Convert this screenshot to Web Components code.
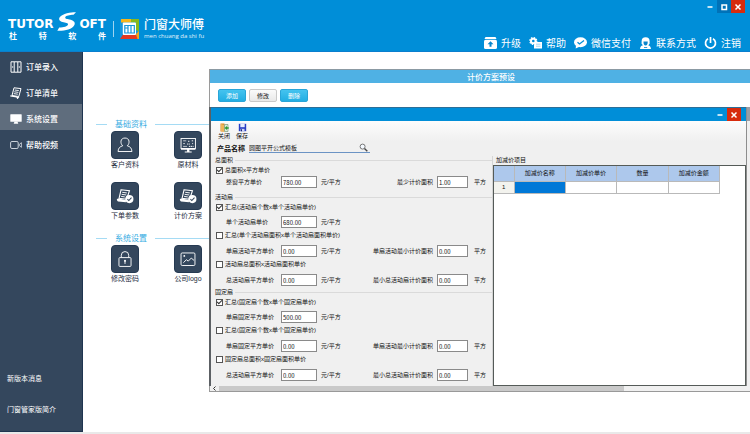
<!DOCTYPE html>
<html lang="zh-CN">
<head>
<meta charset="utf-8">
<title>门窗大师傅</title>
<style>
  html, body { margin: 0; }
  body {
    min-height: 100vh; display: flex; flex-direction: column; background: #fff;
    font-family: "Liberation Sans", "Noto Sans CJK SC", sans-serif; font-size: 6px; color: #111;
    --blue: #008ed8; --navy: #34475d;
  }
  main { flex: 1; display: flex; }
</style>
</head>
<body>
<app-header></app-header>
<main>
  <side-nav></side-nav>
  <tile-menu></tile-menu>
  <plan-dialog></plan-dialog>
</main>
<status-strip></status-strip>

<script>
const define = (name, html) => {
  const t = document.createElement('template');
  t.innerHTML = '<style>*,:host{box-sizing:border-box}button{font:inherit;color:inherit;border:0;background:none;padding:0;margin:0}a{color:inherit;text-decoration:none}svg{display:block}</style>' + html;
  customElements.define(name, class extends HTMLElement {
    constructor() {
      super();
      this.attachShadow({ mode: 'open' }).append(t.content.cloneNode(true));
    }
  });
};

const ICONS = {
  upgrade: '<svg viewBox="0 0 13 12"><path d="M1.5 0h10l1 2H.5z" fill="#fff"/><rect y="2.8" width="13" height="9.2" rx="1.6" fill="#fff"/><path d="M6.500 4.300l3 3H7.500v2.400h-2V7.300h-2z" fill="#0a86cc"/></svg>',
  help: '<svg viewBox="0 0 13 12"><circle cx="4.300" cy="4" r="2.300" fill="none" stroke="#fff" stroke-width="2"/><circle cx="4.300" cy="4" r="3.500" fill="none" stroke="#fff" stroke-width="1.200" stroke-dasharray="1.400 1.350"/><path d="M6 5h7v6.500H5V8z" fill="#fff"/><path d="M7 7.200h4.500M7 9.200h4.500" stroke="#7cc3ea" stroke-width=".7"/></svg>',
  chat: '<svg viewBox="0 0 13 12"><ellipse cx="6.500" cy="5.200" rx="6.500" ry="5" fill="#fff"/><path d="M2 8l-.3 3.600L6 9.500z" fill="#fff"/><path d="M3.500 5.200l2 1.700 4.500-3.300" fill="none" stroke="#008ed8" stroke-width="1.300"/></svg>',
  contact: '<svg viewBox="0 0 13 12"><path d="M2.600 4.500a4 4.200 0 0 1 8 0v2L9 9H4.200L2.600 6.500z" fill="#fff"/><path d="M1 12c.2-2.400 1.300-3.400 3.500-3.700h4c2.200.3 3.300 1.300 3.500 3.700z" fill="#fff"/><path d="M4.500 4.600h4.200c.2 3-.8 3.800-2.100 3.800S4.300 7.600 4.500 4.600z" fill="#0a86cc"/><path d="M5 10.500h3.200" stroke="#0a86cc" stroke-width=".8"/></svg>',
  power: '<svg viewBox="0 0 13 12"><path d="M4 1.700a5 5 0 1 0 5 0" fill="none" stroke="#fff" stroke-width="1.700"/><path d="M6.500 0v6" stroke="#fff" stroke-width="1.700"/></svg>',
  door: '<svg viewBox="0 0 12 12"><path d="M1 .8h10v10.400H1zM4.200 1v10M7.800 1v10" fill="none" stroke="#fff"/><path d="M2.700 5v2M9.300 5v2" stroke="#fff" stroke-width=".7"/></svg>',
  list: '<svg viewBox="0 0 12 12"><path d="M4 .8l7 .8-2.200 7.900-6.800-1z" fill="none" stroke="#fff"/><path d="M4.800 3l4 .6M4.300 4.800l4 .6M3.800 6.600l4 .6" stroke="#fff" stroke-width=".9"/><path d="M.3 8.800l6.400 1 .8 1.500 1.400-1.700" fill="none" stroke="#fff" stroke-width="1.200"/></svg>',
  monitor: '<svg viewBox="0 0 12 12"><rect x=".3" y="1.300" width="11.400" height="7.400" rx=".5" fill="#fff"/><path d="M4.500 8.500h3l.8 2.200H3.700z" fill="#fff"/></svg>',
  camera: '<svg viewBox="0 0 12 12"><rect x=".6" y="2.500" width="7.600" height="7" rx="1.300" fill="none" stroke="#dce3ea" stroke-width=".9"/><path d="M9.300 5.400l2.100-1.700v4.600L9.300 6.600z" fill="none" stroke="#dce3ea" stroke-width=".8"/></svg>',
  user: '<svg viewBox="0 0 28 28"><path d="M11.600 14.800C9.800 13.400 9.500 11.500 9.700 9.800 10 7.700 11.600 6.500 14 6.500s4 1.200 4.300 3.300c.2 1.700-.1 3.600-1.900 5 3 .9 4.800 2.300 5.100 6.200H6.500c.3-3.900 2.100-5.300 5.100-6.200z" fill="none" stroke="#fff" stroke-width="1"/></svg>',
  material: '<svg viewBox="0 0 28 28"><rect x="6.500" y="7" width="15.500" height="10.800" fill="none" stroke="#fff"/><path d="M9 9.500h3M14 10h2M18 9.500h2M9 12.500h2M13 13h3M18.500 12.500h1M9 15.500h4M15 15.500h5" stroke="#fff" stroke-dasharray="1.500 .6"/><path d="M6.500 17.500H22v1.700H6.500zM13 19h2.500v2H18v1h-7.500v-1H13z" fill="#fff"/></svg>',
  doc: '<svg viewBox="0 0 28 28"><path d="M9.800 7.200l9 1-3 9.300-8.200-1z" fill="none" stroke="#fff" stroke-width="1.200"/><path d="M11 10l5 .7M10.400 12.200l5 .7M9.800 14.400l4 .6" stroke="#fff"/><path d="M5.300 17.300l1.700-.5 8 1.500v2.500l-8.500-.9c-.9-.2-1.400-1.500-1.200-2.600z" fill="#fff"/><circle cx="18.700" cy="17.300" r="4.400" fill="#fff"/><path d="M16.600 17.300l1.500 1.600 2.900-3.200" fill="none" stroke="#34475d" stroke-width="1.100"/></svg>',
  lock: '<svg viewBox="0 0 28 28"><rect x="7.500" y="12.500" width="13" height="9.500" rx="1" fill="none" stroke="#fff"/><path d="M10 12.300V10a4 4 0 0 1 8 0v2.300" fill="none" stroke="#fff"/><circle cx="14" cy="16" r="1.100" fill="#fff"/><path d="M14 16v3.300" stroke="#fff"/></svg>',
  image: '<svg viewBox="0 0 28 28"><rect x="6.500" y="7.500" width="15" height="13.500" rx="1.200" fill="none" stroke="#fff"/><circle cx="10" cy="10.700" r="1" fill="#fff"/><path d="M9 18l3.300-3.200 2 1.500 3.200-3.300 3 2.500" fill="none" stroke="#fff"/></svg>'
};

/* ---------- small parts ---------- */
customElements.define('app-icon', class extends HTMLElement {
  constructor() {
    super();
    this.attachShadow({ mode: 'open' }).innerHTML =
      '<style>:host{display:block;flex:none}svg{display:block;width:100%;height:100%}</style>' + (ICONS[this.getAttribute('name')] || '');
  }
});

define('status-strip', '<style>:host{display:block;height:2px;background:#e9e9e9}</style>');

define('window-buttons', `<style>
  :host{display:flex;justify-content:flex-end}
  button{width:14px;height:13px;display:grid;place-items:center}
  .close{background:#d72b0d}
  .max{background:#0072b8}
  :host([compact]) .max{display:none}
  svg{width:8px;height:8px;fill:none;stroke:#fff;stroke-width:1.500}
</style>
<button aria-label="最小化"><svg viewBox="0 0 8 8"><path d="M1.500 4h5"/></svg></button>
<button class="max" aria-label="最大化"><svg viewBox="0 0 8 8"><path d="M2 2h4.500v4.500H2z"/></svg></button>
<button class="close" aria-label="关闭"><svg viewBox="0 0 8 8"><path d="M1.500 1.500l5 5M6.500 1.500l-5 5"/></svg></button>`);

/* ---------- header ---------- */
define('brand-logo', `<style>
  :host{display:flex;padding:13px 0 0 8px;color:#fff}
  .tutor{width:98px}
  .word{display:flex;align-items:flex-end;justify-content:space-between;height:18px;font:bold 12px/14px "DejaVu Sans",sans-serif}
  .word svg{width:21px;height:19px}
  .cn{display:flex;justify-content:space-between;padding:0 0 0 1px;font:bold 8px/9px "Noto Sans CJK SC",sans-serif}
  .bar{width:1px;height:16px;margin:8px 6px 0 7px;background:#9fd4f0}
  .app{width:19px;height:20px;margin-top:6px}
  .name{margin-left:5px;padding-top:5px}
  .name b{display:block;font:500 12px/14px "Liberation Sans","Noto Sans CJK SC",sans-serif}
  .name small{display:block;font:6px/8px "Open Sans",sans-serif;white-space:nowrap;color:#e2f3fb}
</style>
<div class="tutor">
  <div class="word"><span>TUTOR</span>
    <svg viewBox="0 0 20 19"><path d="M19.500.3C15 .2 6 1.500 3.200 5.200 1.700 7.500 3.300 9.300 6 10c3 .8 6 .8 5.500 2.500-.6 2-4 2.800-8.800 3L.8 18.700c7 .3 14.800-1.200 17.100-5.700 1.400-3.200-1.400-4.600-4.900-5.500C10.300 6.800 8.200 6.600 8.800 5.200 9.600 3.600 13 2.900 17 2.800z" fill="#fff"/></svg>
    <span>OFT</span></div>
  <div class="cn"><span>杜</span><span>特</span><span>软</span><span>件</span></div>
</div>
<div class="bar"></div>
<svg class="app" viewBox="0 0 19 20"><rect width="19" height="20" rx="1.500" fill="#1597dc"/><path d="M1 0h12l-2 3.500H1z" fill="#f6b51c"/><path d="M11 0h8v13l-3-2V3.500h-5z" fill="#86b81e"/><path d="M19 12v8h-4l1-5z" fill="#f3a51b"/><path d="M0 20l3-4.500h13l1.500 4.500z" fill="#e33a20"/><rect x="2.800" y="3.500" width="13.200" height="12.500" rx="1" fill="#fff"/><path d="M4.800 6.500h9.500v7.500H4.800zM8 6.500V14M11 6.500V14M5 9h3" fill="none" stroke="#1597dc" stroke-width="1.200"/></svg>
<div class="name"><b>门窗大师傅</b><small>men chuang da shi fu</small></div>`);

define('header-link', `<style>
  :host{display:block;font:10px/14px "Noto Sans CJK SC",sans-serif}
  a{display:flex;align-items:center;gap:4px;white-space:nowrap}
  ::slotted(app-icon){width:13px;height:12px}
</style><a href="#"><slot name="icon"></slot><slot></slot></a>`);

define('app-header', `<style>
  :host{display:flex;justify-content:space-between;height:52px;background:var(--blue);border-bottom:1px solid #0a7fce;color:#fff}
  .right{display:flex;flex-direction:column;justify-content:space-between}
  window-buttons{padding-right:5px}
  nav{display:flex;gap:8px;padding:0 9px 1px 0}
</style>
<brand-logo></brand-logo>
<div class="right">
  <window-buttons></window-buttons>
  <nav>
    <header-link><app-icon slot="icon" name="upgrade"></app-icon>升级</header-link>
    <header-link><app-icon slot="icon" name="help"></app-icon>帮助</header-link>
    <header-link><app-icon slot="icon" name="chat"></app-icon>微信支付</header-link>
    <header-link><app-icon slot="icon" name="contact"></app-icon>联系方式</header-link>
    <header-link><app-icon slot="icon" name="power"></app-icon>注销</header-link>
  </nav>
</div>`);

/* ---------- sidebar ---------- */
define('nav-item', `<style>
  :host{display:block;font:500 8px/12px "Noto Sans CJK SC",sans-serif}
  :host([selected]){background:#5f6d7d}
  a{display:flex;align-items:center;gap:4px;height:26px;padding:4px 0 0 10px}
  ::slotted(app-icon){width:12px;height:12px}
</style><a href="#"><slot name="icon"></slot><slot></slot></a>`);

define('side-nav', `<style>
  :host{display:flex;flex-direction:column;justify-content:space-between;flex:none;width:83px;background:var(--navy);color:#fff;border-right:1px solid #1f3550;border-bottom:1px solid #1f3550}
  .foot{display:flex;flex-direction:column;padding:0 0 6px 7px;font:7px/31px "Noto Sans CJK SC",sans-serif}
</style>
<nav>
  <nav-item><app-icon slot="icon" name="door"></app-icon>订单录入</nav-item>
  <nav-item><app-icon slot="icon" name="list"></app-icon>订单清单</nav-item>
  <nav-item selected><app-icon slot="icon" name="monitor"></app-icon>系统设置</nav-item>
  <nav-item><app-icon slot="icon" name="camera"></app-icon>帮助视频</nav-item>
</nav>
<div class="foot"><a href="#">新版本消息</a><a href="#">门窗管家版简介</a></div>`);

/* ---------- tiles ---------- */
define('menu-section', `<style>
  :host{display:block}
  h2{display:flex;align-items:center;gap:8px;margin:0 0 2px;padding-left:13px;font:8px/10px "Noto Sans CJK SC",sans-serif;color:#35abe2}
  h2::before{content:"";width:11px;height:1px;background:#a5dbf4}
  h2::after{content:"";flex:1;height:1px;background:#a5dbf4}
  .grid{display:grid;grid-template-columns:40px 40px;gap:12px 23px;padding-left:22px}
</style><h2><slot name="title"></slot></h2><div class="grid"><slot></slot></div>`);

define('menu-tile', `<style>
  :host{display:block}
  button{display:flex;flex-direction:column;align-items:center;gap:1px;width:100%;font:7px/10px "Liberation Sans","Noto Sans CJK SC",sans-serif;color:#1d2c3d;white-space:nowrap}
  .box{width:28px;height:28px;border-radius:4px;background:var(--navy);border:1px solid #263a52}
  ::slotted(app-icon){width:26px;height:26px}
</style><button><span class="box"><slot name="icon"></slot></span><slot></slot></button>`);

define('tile-menu', `<style>
  :host{display:flex;flex-direction:column;gap:12px;flex:none;width:126px;padding-top:67px}
</style>
<menu-section><span slot="title">基础资料</span>
  <menu-tile><app-icon slot="icon" name="user"></app-icon>客户资料</menu-tile>
  <menu-tile><app-icon slot="icon" name="material"></app-icon>原材料</menu-tile>
  <menu-tile><app-icon slot="icon" name="doc"></app-icon>下单参数</menu-tile>
  <menu-tile><app-icon slot="icon" name="doc"></app-icon>计价方案</menu-tile>
</menu-section>
<menu-section><span slot="title">系统设置</span>
  <menu-tile><app-icon slot="icon" name="lock"></app-icon>修改密码</menu-tile>
  <menu-tile><app-icon slot="icon" name="image"></app-icon>公司logo</menu-tile>
</menu-section>`);

/* ---------- form parts ---------- */
define('form-group', `<style>
  :host{display:block;padding-bottom:3px}
  :host([short]){padding-bottom:0}
  .legend{display:flex;align-items:center;gap:2px;margin-bottom:1px;padding-left:4px;line-height:8px}
  .legend::after{content:"";flex:1;height:1px;background:#dadada}
</style><div role="group" aria-labelledby="t"><div class="legend" id="t"><slot name="title"></slot></div><slot></slot></div>`);

define('check-row', `<style>
  :host{display:block}
  label{display:flex;align-items:center;gap:2px;height:10px;padding-left:5px;white-space:nowrap}
  input{appearance:none;display:grid;place-items:center;width:7px;height:7px;margin:0;border:1px solid #555;background:#fff}
  input:checked::after{content:"";width:4px;height:2px;border:solid #333;border-width:0 0 1px 1px;transform:translateY(-1px) rotate(-45deg)}
</style><label><input type="checkbox"><slot></slot></label>`);

customElements.define('field-row', class extends HTMLElement {
  constructor() {
    super();
    const g = n => this.getAttribute(n);
    const second = g('label2') ? `<label for="b">${g('label2')}</label><input id="b" value="${g('value2')}"><span class="u">平方</span>` : '';
    this.attachShadow({ mode: 'open' }).innerHTML = `<style>
      *{box-sizing:border-box}
      :host{display:grid;grid-template-columns:51px 36px 1fr auto 31px 20px;column-gap:4px;align-items:center;margin:4px 0 2px;padding-left:15px;white-space:nowrap}
      :host([label2]){margin-top:5px}
      :host([tight]){margin-top:1px}
      input{width:100%;height:12px;padding:0 1px;margin:0;border:1px solid #8a8a8a;border-radius:0;background:#fff;font:6px "Noto Sans CJK SC",sans-serif;color:#111}
      .u{padding-left:2px}
      .first{padding-left:0}
    </style><label for="a">${g('label')}</label><input id="a" value="${g('value')}"><span class="u first">元/平方</span>${second}`;
  }
});

define('price-table', `<style>
  :host{display:flex;flex-direction:column}
  h3{margin:0 0 1px;padding-left:3px;font:inherit;line-height:8px}
  .frame{flex:1;border:1px solid #555b58;background:#fff}
  table{width:226px;max-width:100%;border-collapse:collapse;table-layout:fixed;text-align:center}
  th,td{padding:0;border:1px solid #b9b9b9;font-weight:normal;border-top:0}
  th:first-child{border-left:0}
  thead th{height:15px;background:#adc8ec}
  tbody th{background:#f3f3ee}
  tbody td,tbody th{height:12px;line-height:10px}
  .no{width:20px}
  tbody .sel{background:#0078d7}
</style>
<h3>加减价项目</h3>
<div class="frame"><table>
  <thead><tr><th class="no"></th><th>加减价名称</th><th>加减价单价</th><th>数量</th><th>加减价金额</th></tr></thead>
  <tbody><tr><th>1</th><td class="sel"></td><td></td><td></td><td></td></tr></tbody>
</table></div>`);

/* ---------- inner window ---------- */
define('plan-window', `<style>
  :host{display:block;flex:1;border-left:2px solid #5c6064;border-right:1px solid #8d8d8d;background:#f0f0f0;font:6px/8px "Liberation Sans","Noto Sans CJK SC",sans-serif}
  .bar{height:14px;background:var(--blue);border-top:1px solid #2d6f98}
  window-buttons{padding-right:5px}
  .tools{display:flex;gap:6px;height:20px;padding:2px 7px 0;background:linear-gradient(#fcfcfc,#f0f0f0)}
  .tools button{display:flex;flex-direction:column;align-items:center;line-height:8px}
  .tools svg{width:9px;height:9px}
  .product{display:flex;align-items:center;gap:4px;height:15px;padding:0 0 2px 6px}
  .product label{font:bold 7px/10px "Noto Sans CJK SC",sans-serif}
  .search{display:flex;align-items:center;width:121px;border-bottom:1px solid #6b93c4}
  .search input{flex:1;min-width:0;height:10px;border:0;padding:0;background:none;font:inherit;color:inherit;outline:0}
  .search svg{width:9px;height:9px;margin-right:2px}
  .body{display:flex}
  .form{flex:none;width:282px;border-right:1px solid #d5d5d5}
  price-table{flex:1}
</style>
<div class="bar"><window-buttons compact></window-buttons></div>
<div class="tools">
  <button><svg viewBox="0 0 9 9"><path d="M.5.5h4v8h-4z" fill="#d98a2b"/><path d="M1 1l3 1v7L1 8z" fill="#f0b65b"/><path d="M4.500 1.500H8v7H4.500z" fill="#d9ecd8" stroke="#6b8d6b" stroke-width=".6"/><path d="M4.500 5L7 3v1.300h1.700v1.500H7V7z" fill="#2e9b35"/></svg>关闭</button>
  <button><svg viewBox="0 0 9 9"><path d="M.8.8h7.400v7.400H.8z" fill="#2a3fc4"/><path d="M2.300.8h4.400v3.400H2.300z" fill="#e8edff"/><path d="M2.500 5.800h4v2.400h-4z" fill="#cdd5f5"/><path d="M3 6.200h1v2H3z" fill="#17246f"/></svg>保存</button>
</div>
<div class="product"><label for="p">产品名称</label>
  <div class="search"><input id="p" value="圆图平开公式模板"><svg viewBox="0 0 9 9"><circle cx="3.600" cy="3.600" r="2.500" fill="#f4f9ff" stroke="#777"/><path d="M5.500 5.500l2.800 2.800" stroke="#444" stroke-width="1.400"/></svg></div>
</div>
<div class="body">
  <div class="form">
    <form-group><span slot="title">总面积</span>
      <check-row checked>总面积x平方单价</check-row>
      <field-row tight label="整窗平方单价" value="780.00" label2="最少计价面积" value2="1.00"></field-row>
    </form-group>
    <form-group short><span slot="title">活动扇</span>
      <check-row checked>汇总(活动扇个数x单个活动扇单价)</check-row>
      <field-row label="单个活动扇单价" value="680.00"></field-row>
      <check-row>汇总(单个活动扇面积x单个活动扇面积单价)</check-row>
      <field-row label="单扇活动平方单价" value="0.00" label2="单扇活动最小计价面积" value2="0.00"></field-row>
      <check-row>活动扇总面积x活动扇面积单价</check-row>
      <field-row label="总活动扇平方单价" value="0.00" label2="最小总活动扇计价面积" value2="0.00"></field-row>
    </form-group>
    <form-group><span slot="title">固定扇</span>
      <check-row checked>汇总(固定扇个数x单个固定扇单价)</check-row>
      <field-row label="单扇固定平方单价" value="500.00"></field-row>
      <check-row>汇总(固定扇个数x单个固定扇单价)</check-row>
      <field-row label="单扇固定平方单价" value="0.00" label2="单扇活动最小计价面积" value2="0.00"></field-row>
      <check-row>固定扇总面积x固定扇面积单价</check-row>
      <field-row label="总活动扇平方单价" value="0.00" label2="最小总活动扇计价面积" value2="0.00"></field-row>
    </form-group>
  </div>
  <price-table></price-table>
</div>`);

define('scroll-bar', `<style>
  :host{display:flex;height:6px;background:#f0f0f0;border:solid #999;border-width:0 0 1px 1px}
  svg{width:9px;height:5px}
  .thumb{flex:0 1 75%;background:#c9c9c9}
</style><svg viewBox="0 0 9 5"><path d="M5.500.5l-2 2 2 2" fill="none" stroke="#333"/></svg><div class="thumb"></div>`);

define('plan-dialog', `<style>
  :host{display:block;flex:1;min-width:0;align-self:flex-start;margin-top:17px}
  h1{margin:0;padding-left:22px;height:14px;border-top:1px solid #8b9aa3;background:#4fb1e4;color:#fff;text-align:center;font:500 8px/13px "Noto Sans CJK SC",sans-serif}
  header{border-left:1px solid #9a9a9a}
  .actions{display:flex;gap:3px;padding:6px 0 5px 8px}
  .actions button{width:28px;height:13px;border:1px solid #29a5d8;border-radius:2px;background:linear-gradient(#45c3ef,#22aee3);color:#fff;font:6px/9px "Noto Sans CJK SC",sans-serif}
  .actions .plain{border-color:#c9c9c9;background:linear-gradient(#fafafa,#e9e9e9);color:#111}
  .stage{display:flex}
  .rest{width:3px;background:linear-gradient(#9a9da6 14px,#f0f0f0 14px)}
</style>
<header><h1>计价方案预设</h1>
<div class="actions"><button>添加</button><button class="plain">修改</button><button>删除</button></div></header>
<div class="stage"><plan-window></plan-window><div class="rest"></div></div>
<scroll-bar></scroll-bar>`);

/* Mirror the "checked" attribute of each row onto its tick box. */
document.querySelector('plan-dialog').shadowRoot.querySelector('plan-window')
  .shadowRoot.querySelectorAll('check-row[checked]')
  .forEach(r => r.shadowRoot.querySelector('input').checked = true);
</script>
</body>
</html>
